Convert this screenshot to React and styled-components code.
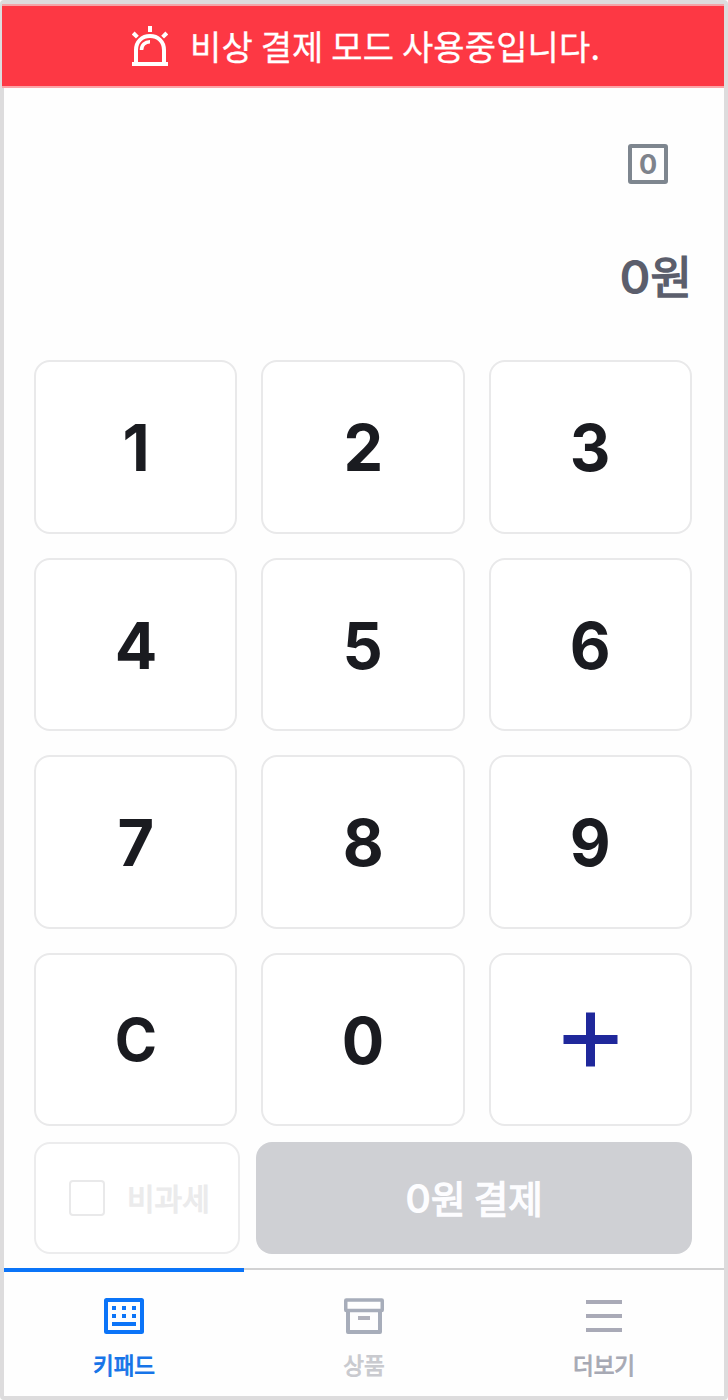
import React from 'react';
import styled, { createGlobalStyle } from 'styled-components';

const keys = ['1', '2', '3', '4', '5', '6', '7', '8', '9', 'C', '0'];

const App = () => {
  return (
    <>
      <GlobalStyle />
      <StyledFrame>
        <StyledBanner>
          <SirenIcon />
          <StyledBannerText>비상 결제 모드 사용중입니다.</StyledBannerText>
        </StyledBanner>
        <StyledDisplay>
          <StyledCount>0</StyledCount>
          <StyledAmount>0<b>원</b></StyledAmount>
        </StyledDisplay>
        <StyledKeypad>
          {keys.map((key) => (
            <StyledKey key={key}>
              <StyledKeyText $letter={key === 'C'}>{key}</StyledKeyText>
            </StyledKey>
          ))}
          <StyledKey aria-label="더하기">
            <PlusIcon />
          </StyledKey>
        </StyledKeypad>
        <StyledActions>
          <StyledTaxFree>
            <StyledCheckbox />
            <StyledTaxLabel>비과세</StyledTaxLabel>
          </StyledTaxFree>
          <StyledPay>
            <StyledPayText>0<b>원 결제</b></StyledPayText>
          </StyledPay>
        </StyledActions>
        <StyledTabs>
          <StyledTab $active>
            <KeypadIcon />
            <StyledTabLabel $color="#1674e8">키패드</StyledTabLabel>
          </StyledTab>
          <StyledTab>
            <BoxIcon />
            <StyledTabLabel $color="#c9cacf">상품</StyledTabLabel>
          </StyledTab>
          <StyledTab>
            <MenuIcon />
            <StyledTabLabel $color="#a7a9b4">더보기</StyledTabLabel>
          </StyledTab>
        </StyledTabs>
      </StyledFrame>
    </>
  )
}

const SirenIcon = () => (
  <svg width="36" height="40" viewBox="0 0 36 40" fill="none" stroke="#fff" strokeWidth="4">
    <path d="M0 38H36M4 38V24C4 15.5 10 10 18 10S32 15.5 32 24V38M18 0V6" />
    <path d="M9.5 24C9.5 19 13 15.7 18 15.7" strokeWidth="3.6" />
    <path d="M1.2 7L5.4 11.2M34.8 7L30.6 11.2" strokeWidth="4" />
  </svg>
)

const PlusIcon = () => (
  <svg width="55" height="55" viewBox="0 0 55 55" fill="#1f289b">
    <path d="M23 0.5H32V23H54.5V32H32V54.5H23V32H0.5V23H23Z" />
  </svg>
)

const KeypadIcon = () => (
  <svg width="40" height="36" viewBox="0 0 40 36" fill="#0b74f8">
    <rect x="2" y="2" width="36" height="32" rx="0.5" fill="none" stroke="#0b74f8" strokeWidth="4" />
    <path d="M8 8h4v4H8zM18 8h4v4h-4zM28 8h4v4h-4zM8 16h4v4H8zM18 16h4v4h-4zM28 16h4v4h-4zM8 24h24v4H8z" />
  </svg>
)

const BoxIcon = () => (
  <svg width="40" height="36" viewBox="0 0 40 36" fill="none" stroke="#a7adba" strokeWidth="4">
    <path d="M4 13V34H36V13" strokeLinejoin="round" />
    <rect x="1.75" y="2" width="36.5" height="10.5" rx="0.5" strokeWidth="3.5" />
    <path d="M14 20H26" stroke="#b1b2bc" />
  </svg>
)

const MenuIcon = () => (
  <svg width="36" height="36" viewBox="0 0 36 36" fill="none" stroke="#a9aab7" strokeWidth="4">
    <path d="M0 4H36M0 18H36M0 32H36" />
  </svg>
)

const GlobalStyle = createGlobalStyle`
  * {
    box-sizing: border-box;
  }

  body {
    margin: 0;
    background: #fff;
    font-family: "Inter", "Noto Sans CJK KR", sans-serif;
  }

  button {
    font-family: inherit;
    margin: 0;
    padding: 0;
  }
`;

const StyledFrame = styled.div`
  display: flex;
  flex-direction: column;
  width: 728px;
  height: 1400px;
  border: 4px solid #dddcdd;
  border-radius: 4px;
  background: #fefefe;
`;

const StyledBanner = styled.div`
  display: flex;
  align-items: center;
  gap: 22px;
  flex: none;
  height: 84px;
  margin-left: -2px;
  padding-left: 130px;
  border-top: 2px solid #f4a4a8;
  border-bottom: 2px solid #fca4a8;
  background: #fd3844;
`;

const StyledBannerText = styled.span`
  color: #fff;
  font: 400 34px/48px "Noto Sans CJK KR", sans-serif;
  letter-spacing: 0.15px;
  -webkit-text-stroke: 0.3px #fff;
  white-space: nowrap;
`;

const StyledDisplay = styled.div`
  display: flex;
  flex-direction: column;
  align-items: flex-end;
  flex: none;
  height: 272px;
  padding: 56px 32px 0 0;
`;

const StyledCount = styled.div`
  display: flex;
  align-items: center;
  justify-content: center;
  width: 40px;
  height: 40px;
  margin-right: 24px;
  padding-top: 2px;
  border: 4px solid #7e868f;
  border-radius: 3px;
  color: #7e838c;
  font-size: 27px;
  font-weight: 700;
  line-height: 32px;
`;

const StyledAmount = styled.div`
  margin-top: 61px;
  color: #5b5e6c;
  font-size: 47px;
  font-weight: 600;
  line-height: 60px;
  white-space: nowrap;

  b {
    font: 400 45px/60px "Noto Sans CJK KR", sans-serif;
    -webkit-text-stroke: 1.6px #5b5e6c;
  }
`;

const StyledKeypad = styled.div`
  display: grid;
  grid-template-columns: repeat(3, 1fr);
  grid-template-rows: repeat(4, 1fr);
  gap: 24px;
  flex: none;
  height: 766px;
  padding: 0 32px 0 30px;
`;

const StyledKey = styled.button`
  display: flex;
  align-items: center;
  justify-content: center;
  border: 2px solid #e9e9ea;
  border-radius: 16px;
  background: #fff;
`;

const StyledKeyText = styled.span`
  padding-top: ${({ $letter }) => ($letter ? 0 : 2)}px;
  color: #1a1b20;
  font-size: ${({ $letter }) => ($letter ? 59 : 65)}px;
  font-weight: 650;
  transform: scaleX(0.97);
`;

const StyledActions = styled.div`
  display: flex;
  gap: 16px;
  flex: none;
  height: 112px;
  margin: 16px 32px 14px 30px;
`;

const StyledTaxFree = styled.label`
  display: flex;
  align-items: center;
  gap: 22px;
  width: 206px;
  padding-left: 33px;
  border: 2px solid #ececed;
  border-radius: 16px;
  background: #fff;
`;

const StyledCheckbox = styled.span`
  width: 36px;
  height: 36px;
  border: 2px solid #e9e9ea;
  border-radius: 4px;
`;

const StyledTaxLabel = styled.span`
  padding-bottom: 2px;
  color: #ebebec;
  font: 400 30px/44px "Noto Sans CJK KR", sans-serif;
  -webkit-text-stroke: 1.2px #ebebec;
`;

const StyledPay = styled.button`
  flex: 1;
  border: 0;
  border-radius: 16px;
  background: #cfd0d4;
`;

const StyledPayText = styled.span`
  color: #fdfdff;
  font-size: 39px;
  font-weight: 600;
  line-height: 56px;

  b {
    font: 400 37.5px/56px "Noto Sans CJK KR", sans-serif;
    -webkit-text-stroke: 1.4px #fdfdff;
  }
`;

const StyledTabs = styled.nav`
  display: grid;
  grid-template-columns: repeat(3, 1fr);
  flex: 1;
`;

const StyledTab = styled.div`
  display: flex;
  flex-direction: column;
  align-items: center;
  padding-top: ${({ $active }) => ($active ? 26 : 28)}px;
  border-top: ${({ $active }) => ($active ? '4px solid #0b74f8' : '2px solid #d2d2d3')};
`;

const StyledTabLabel = styled.span`
  margin-top: 13px;
  color: ${({ $color }) => $color};
  font: 400 22.5px/34px "Noto Sans CJK KR", sans-serif;
  -webkit-text-stroke: 0.9px ${({ $color }) => $color};
`;

export default App
